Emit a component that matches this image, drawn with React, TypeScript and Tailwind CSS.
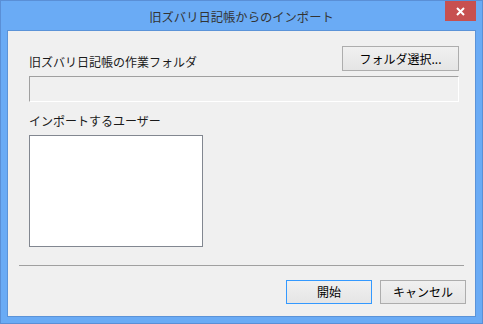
import React from 'react';

const font = { fontFamily: '"Noto Sans CJK JP", "Noto Sans", sans-serif' };

const Button: React.FC<{ label: string; primary?: boolean; className?: string }> = ({ label, primary, className }) => (
  <button
    className={`h-[24px] w-[86px] border bg-gradient-to-b from-[#f0f0f0] to-[#e5e5e5] text-[12px] leading-none text-black ${
      primary ? 'border-[#3399ff]' : 'border-[#adadad]'
    } ${className ?? ''}`}
  >
    {label}
  </button>
);

export default function App() {
  return (
    <div style={font} className="w-[483px] h-[324px] border border-[#5a8fd6] bg-[#6aabf5] px-[6px] flex flex-col">
      <div className="h-[29px] grid grid-cols-[31px_1fr_31px] items-start">
        <div />
        <div className="text-center text-[12.3px] leading-none text-[#333333] pt-[10px]">旧ズバリ日記帳からのインポート</div>
        <div className="h-[20px] w-[31px] bg-[#c75050] flex items-center justify-center">
          <svg width="9" height="9" viewBox="0 0 9 9">
            <path d="M1 1 L8 8 M8 1 L1 8" stroke="white" strokeWidth="2" />
          </svg>
        </div>
      </div>
      <div className="h-[287px] border border-[#5b93d8] bg-[#f0f0f0] pl-[21px] pr-[16px] flex flex-col text-[12px] text-[#1a1a1a]">
        <div className="flex justify-between items-end pt-[15px]">
          <span className="leading-[16px] mb-[1px]">旧ズバリ日記帳の作業フォルダ</span>
          <button className="h-[25px] w-[117px] border border-[#adadad] bg-gradient-to-b from-[#f0f0f0] to-[#e5e5e5] text-[12px] leading-none text-black">
            フォルダ選択...
          </button>
        </div>
        <div className="mt-[5px] h-[26px] w-[430px] border border-t-[#a0a0a0] border-l-[#a0a0a0] border-r-white border-b-white bg-[#f0f0f0]" />
        <span className="mt-[11px] leading-[16px]">インポートするユーザー</span>
        <div className="mt-[6px] h-[112px] w-[174px] border border-[#828790] bg-white" />
        <div className="mt-[18px] -ml-[10px] h-px w-[445px] bg-[#a0a0a0]" />
        <div className="mt-[14px] -mr-[7px] flex justify-end gap-[8px]">
          <Button label="開始" primary />
          <Button label="キャンセル" />
        </div>
      </div>
    </div>
  );
}
